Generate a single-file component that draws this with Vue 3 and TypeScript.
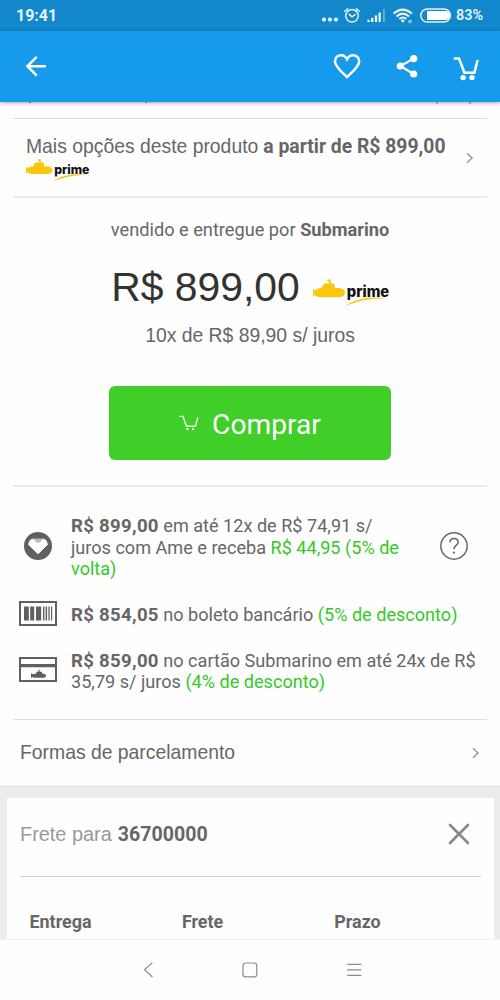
<script setup lang="ts">
interface Part {
  text: string
  kind?: 'strong' | 'promo'
}

interface Payment {
  id: 'ame' | 'boleto' | 'card'
  lines: Part[][]
}

const payments: Payment[] = [
  {
    id: 'ame',
    lines: [
      [{ text: 'R$ 899,00', kind: 'strong' }, { text: ' em até 12x de R$ 74,91 s/' }],
      [{ text: 'juros com Ame e receba ' }, { text: 'R$ 44,95 (5% de', kind: 'promo' }],
      [{ text: 'volta)', kind: 'promo' }],
    ],
  },
  {
    id: 'boleto',
    lines: [
      [
        { text: 'R$ 854,05', kind: 'strong' },
        { text: ' no boleto bancário ' },
        { text: '(5% de desconto)', kind: 'promo' },
      ],
    ],
  },
  {
    id: 'card',
    lines: [
      [{ text: 'R$ 859,00', kind: 'strong' }, { text: ' no cartão Submarino em até 24x de R$' }],
      [{ text: '35,79 s/ juros ' }, { text: '(4% de desconto)', kind: 'promo' }],
    ],
  },
]

const columns: string[] = ['Entrega', 'Frete', 'Prazo']

const submarine =
  'M0 10.9h1.2v2C2.6 11.4 5 10.3 8.4 10.1L10.4 6.4Q11 5.4 12.4 5.4H15.8V3.2H14.4V1.6H17.8V5.4H20Q21.2 5.4 21.4 6.6L22 10.1H25.4C29.6 10.3 31.8 12 31.8 14.8S29.6 19.3 25.4 19.3H9C5.2 19.3 2.6 18.2 1.2 16.8V18.6H0Z'
const swoosh = 'M32 28.6C40 21.4 56 17.8 74 20.3C57 20.2 43 23 32 28.6Z'
</script>

<template>
  <div class="screen">
    <div class="status">
      <span class="clock">19:41</span>
      <svg class="status-icons" width="136" height="31" viewBox="0 0 136 31">
        <g fill="#e6f4fc">
          <circle cx="4" cy="19.6" r="2.1" />
          <circle cx="10" cy="19.6" r="2.1" />
          <circle cx="16" cy="19.6" r="2.1" />
        </g>
        <g fill="none" stroke="#e6f4fc" stroke-width="1.5" stroke-linecap="round">
          <circle cx="32" cy="15.8" r="6.3" />
          <path d="M24.7 11.2 27.6 8.7M39.3 11.2 36.4 8.7M29.2 14.4 32 16.8 35.2 14.6" />
        </g>
        <g fill="#e6f4fc">
          <rect x="47.4" y="19.7" width="2.3" height="2.3" />
          <rect x="51" y="17.8" width="2.3" height="4.2" />
          <rect x="54.8" y="15.4" width="2.3" height="6.6" />
          <rect x="58.5" y="12.5" width="2.3" height="9.5" />
          <rect x="63" y="9" width="1.8" height="13" opacity=".4" />
        </g>
        <g fill="none" stroke="#e6f4fc" stroke-width="2">
          <path d="M73.6 13.6Q82.8 5.6 92 13.6" />
          <path d="M76.5 16.4Q82.8 10.8 89.1 16.4" />
          <path d="M79.3 19.1Q82.8 16 86.3 19.1" />
        </g>
        <circle cx="82.8" cy="20.8" r="1.6" fill="#e6f4fc" />
        <circle cx="90" cy="21.4" r="2" fill="#6fc3f5" />
        <rect x="100.8" y="8.9" width="29.6" height="13.2" rx="6.6" fill="none" stroke="#e6f4fc" stroke-width="1.5" />
        <path d="M107 11h18.5a4.5 4.5 0 0 1 0 9H107z" fill="#fff" />
      </svg>
      <span class="battery">83%</span>
    </div>

    <header class="appbar">
      <svg width="500" height="71" viewBox="0 31 500 71">
        <g fill="none" stroke="#fff" stroke-width="2.5">
          <path d="M46 66.2H28M36.7 56.8 27.4 66.2 36.7 75.6" />
          <path
            d="M347 77C342 72.1 335 66.8 335 61.2C335 57.6 337.8 55.2 341 55.2C343.6 55.2 345.8 56.8 347 59.2C348.2 56.8 350.4 55.2 353 55.2C356.2 55.2 359.2 57.6 359.2 61.2C359.2 66.8 352 72.1 347 77Z"
          />
          <path d="M413.5 58.6 400.5 66 413.5 74" stroke-width="2.2" />
          <path d="M453.8 58.4H459L464.4 72.8H474.4L477.6 60" />
        </g>
        <g fill="#fff">
          <circle cx="413.7" cy="58.6" r="3.6" />
          <circle cx="400.3" cy="66" r="3.6" />
          <circle cx="413.7" cy="74" r="3.6" />
          <circle cx="463.1" cy="77.6" r="2.7" />
          <circle cx="472" cy="77.6" r="2.7" />
        </g>
      </svg>
    </header>

    <main class="content">
      <div class="clipped">
        <svg width="500" height="4" viewBox="0 0 500 4" fill="#6f7377">
          <path d="M29 0h2.4l-.8 1h-1zM145 0h2.4l-.8 1h-1zM435.6 0h1.4l1 1.7h-1.2zM469.8 0h1.5l-1 1.7h-1.3z" />
        </svg>
      </div>

      <section class="more">
        <div class="more-text">
          <p class="more-line"><span class="arial">Mais opções deste produto</span><b>a partir de R$ 899,00</b></p>
          <svg class="prime-small" width="65" height="25" viewBox="0 0 78 30">
            <path :d="submarine" fill="#fcc60c" />
            <text x="33.8" y="18.6" textLength="42.4" lengthAdjust="spacingAndGlyphs">prime</text>
            <path :d="swoosh" fill="#fcc60c" />
          </svg>
        </div>
        <svg class="chevron" width="9" height="12" viewBox="0 0 9 12"><path d="M2 1.2 7 6 2 10.8" /></svg>
      </section>

      <section class="offer">
        <p class="seller">vendido e entregue por <b>Submarino</b></p>
        <div class="price-row">
          <span class="price">R$ 899,00</span>
          <svg class="prime" width="78" height="30" viewBox="0 0 78 30">
            <path :d="submarine" fill="#fcc60c" />
            <text x="33.8" y="18.6" textLength="42.4" lengthAdjust="spacingAndGlyphs">prime</text>
            <path :d="swoosh" fill="#fcc60c" />
          </svg>
        </div>
        <p class="installment">10x de R$ 89,90 s/ juros</p>
        <button class="buy" type="button">
          <svg width="20" height="16" viewBox="0 0 20 16">
            <path d="M.5 1.4H4L7.4 11.2H16.4L18.8 2.2" fill="none" stroke="#e9fbe5" stroke-width="1.4" />
            <circle cx="8.4" cy="14" r="1.2" fill="#e9fbe5" />
            <circle cx="14" cy="14" r="1.2" fill="#e9fbe5" />
          </svg>
          <span>Comprar</span>
        </button>
      </section>

      <section class="payments">
        <div v-for="p in payments" :key="p.id" class="payment" :class="p.id">
          <div class="pay-icon">
            <svg v-if="p.id === 'ame'" width="28" height="28" viewBox="0 0 28 28">
              <circle cx="14" cy="14" r="14" fill="#606060" />
              <path d="M14 21.8 4.6 12.6 5.8 8.8Q7 7.2 9.2 7.2H18.8Q21 7.2 22.2 8.8L23.4 12.6Z" fill="#fff" stroke="#fff" stroke-linejoin="round" />
              <path d="M9.8 7H18.6L16.4 10 14.1 11 11.8 10Z" fill="#bbb" />
            </svg>
            <svg v-else-if="p.id === 'boleto'" width="38" height="25" viewBox="0 0 38 25">
              <rect x="1" y="1" width="36" height="23" fill="none" stroke="#606060" stroke-width="2" />
              <path d="M5 5.4h4.8v14H5zM11.2 5.4h4v14h-4zM17 5.4h5.2v14H17zM24 5.4h1.4v14H24zM26.6 5.4h1.5v14h-1.5zM29.4 5.4h1.3v14h-1.3zM32 5.4h1.2v14h-1.2z" fill="#606060" />
            </svg>
            <svg v-else width="38" height="25" viewBox="0 0 38 25">
              <rect x="1" y="1" width="36" height="23" fill="none" stroke="#606060" stroke-width="2" />
              <path d="M1 7H37V10.3H1zM12 16.2l2.2 1q2-.7 3.2-.8v-1.7h2v-2h1.2v2h2.4v1.7q4 .4 4 2.4t-4 2H16q-1.6-.1-2.4-.7L12 21z" fill="#606060" />
            </svg>
          </div>
          <div class="pay-text">
            <p v-for="(line, i) in p.lines" :key="i">
              <span v-for="(part, j) in line" :key="j" :class="part.kind">{{ part.text }}</span>
            </p>
          </div>
          <svg v-if="p.id === 'ame'" class="help" width="28" height="28" viewBox="0 0 28 28">
            <circle cx="14" cy="14" r="13.2" fill="none" stroke="#666" stroke-width="1.5" />
            <path d="M9.8 10.4Q10 6.6 14 6.6T18.2 10.2C18.2 13.2 14 13.2 14 17.2" fill="none" stroke="#666" stroke-width="1.5" />
            <circle cx="14" cy="20.6" r="1.1" fill="#666" />
          </svg>
        </div>
      </section>

      <section class="plans">
        <span class="arial">Formas de parcelamento</span>
        <svg class="chevron" width="9" height="12" viewBox="0 0 9 12"><path d="M2 1.2 7 6 2 10.8" /></svg>
      </section>

      <section class="shipping">
        <div class="card">
          <div class="card-head">
            <p><span class="arial">Frete para</span><b>36700000</b></p>
            <svg width="22" height="22" viewBox="0 0 22 22">
              <path d="M2 2 20 20M20 2 2 20" stroke="#888" stroke-width="2.6" stroke-linecap="round" />
            </svg>
          </div>
          <div class="columns">
            <span v-for="c in columns" :key="c">{{ c }}</span>
          </div>
        </div>
      </section>
    </main>

    <nav class="navbar">
      <svg width="500" height="60" viewBox="0 940 500 60" fill="none" stroke="#8b8b8b" stroke-width="1.2">
        <path d="M152.4 962.6 144.6 969.8 152.4 977" />
        <rect x="243" y="963" width="13.8" height="13.8" rx="2.6" />
        <path d="M347.2 964.4H361.2M347.2 969.8H361.2M347.2 975.4H361.2" />
      </svg>
    </nav>
  </div>
</template>

<style>
body {
  margin: 0;
  background: #fff;
}
</style>

<style scoped>
* {
  box-sizing: border-box;
}
p {
  margin: 0;
  white-space: pre;
}
svg {
  display: block;
  flex: none;
}
.screen {
  width: 500px;
  height: 1000px;
  display: flex;
  flex-direction: column;
  overflow: hidden;
  background: #fefefe;
  color: #666;
  font-family: Roboto, sans-serif;
}
.arial {
  font-family: "Liberation Sans", Arial, sans-serif;
  font-size: 19.35px;
}
.status {
  height: 31px;
  flex: none;
  display: flex;
  align-items: center;
  background: #1287cc;
  color: #e6f4fc;
  font-weight: 700;
}
.clock {
  width: 320px;
  padding-left: 16px;
  font-size: 16px;
  line-height: 31px;
}
.battery {
  font-size: 14.4px;
  font-weight: 600;
  line-height: 33px;
}
.appbar {
  position: relative;
  height: 71px;
  flex: none;
  background: #169bec;
  box-shadow: 0 1px 4px rgba(0, 0, 0, 0.35);
}
.content {
  height: 837px;
  flex: none;
  display: flex;
  flex-direction: column;
}
.clipped {
  position: relative;
  height: 16px;
  flex: none;
}
.more,
.offer,
.payments,
.plans {
  flex: none;
  margin: 0 13px;
  border-top: 2px solid #ebebeb;
}
.clipped + .more,
.plans {
  border-top: 1px solid #dfdfdf;
}
.more {
  height: 78px;
  display: flex;
  justify-content: space-between;
  padding: 15px 13px 0;
}
.more-line {
  display: flex;
  align-items: baseline;
  gap: 5px;
  height: 24px;
  line-height: 24px;
}
.more-line b {
  font-size: 19.35px;
}
.prime-small {
  margin-top: 0;
}
.prime text,
.prime-small text {
  font: 800 15px Inter, sans-serif;
  fill: #111;
}
.chevron {
  fill: none;
  stroke: #999;
  stroke-width: 1.5;
}
.more .chevron {
  margin-top: 18px;
}
.offer {
  height: 289px;
  display: flex;
  flex-direction: column;
  align-items: center;
  padding-top: 21px;
}
.seller {
  height: 22px;
  font-size: 18.2px;
  line-height: 22px;
}
.price-row {
  display: flex;
  align-items: flex-start;
  gap: 13px;
  margin-top: 22px;
  margin-left: 2px;
  height: 48px;
}
.price {
  color: #333;
  font-family: "Liberation Sans", Arial, sans-serif;
  font-size: 40.9px;
  line-height: 48px;
}
.prime {
  margin-top: 15px;
}
.installment {
  margin-top: 13px;
  height: 22px;
  font-family: "Liberation Sans", Arial, sans-serif;
  font-size: 19.35px;
  line-height: 22px;
}
.buy {
  display: flex;
  align-items: center;
  justify-content: center;
  gap: 13px;
  width: 282px;
  height: 74px;
  margin-top: 40px;
  padding: 3px 0 0;
  border: 0;
  border-radius: 6px;
  background: #40ce29;
  color: #fff;
  font-family: Roboto, sans-serif;
  font-size: 28.2px;
}
.buy svg {
  margin-bottom: 3px;
}
.payments {
  height: 234px;
  padding-top: 28px;
}
.payment {
  display: flex;
  align-items: center;
  font-size: 18.1px;
  line-height: 21.6px;
}
.boleto {
  margin-top: 21px;
}
.payment.card {
  margin-top: 21px;
}
.pay-icon {
  width: 58px;
  padding-left: 6px;
  padding-bottom: 3px;
}
.ame .pay-icon {
  padding-left: 11px;
  padding-bottom: 2px;
}
.help {
  margin-bottom: 2px;
}
.pay-text {
  width: 369px;
}
.strong {
  font-size: 18.6px;
  font-weight: 700;
  line-height: 1;
  letter-spacing: 0.3px;
}
.promo {
  color: #35c828;
}
.plans {
  height: 66px;
  display: flex;
  align-items: center;
  justify-content: space-between;
  padding: 0 7px;
}
.shipping {
  flex: 1;
  background: #ececec;
  padding: 13px 6px 0 7px;
}
.shipping .card {
  height: 100%;
  background: #fefefe;
  padding: 0 13px;
}
.card-head {
  height: 79px;
  display: flex;
  align-items: center;
  justify-content: space-between;
  padding: 0 11px 6px 0;
  border-bottom: 1.5px solid #cfcfcf;
}
.card-head p {
  display: flex;
  align-items: baseline;
  gap: 6px;
  line-height: 24px;
}
.card-head .arial {
  color: #999;
  font-size: 19.9px;
}
.card-head b {
  font-size: 19.6px;
}
.columns {
  display: grid;
  grid-template-columns: 152.4px 152.4px 1fr;
  padding: 34px 0 0 9.5px;
  font-size: 17.9px;
  font-weight: 700;
  line-height: 22px;
}
.navbar {
  height: 61px;
  flex: none;
  background: #fefefe;
  border-top: 1px solid #f2f2f2;
}
</style>
